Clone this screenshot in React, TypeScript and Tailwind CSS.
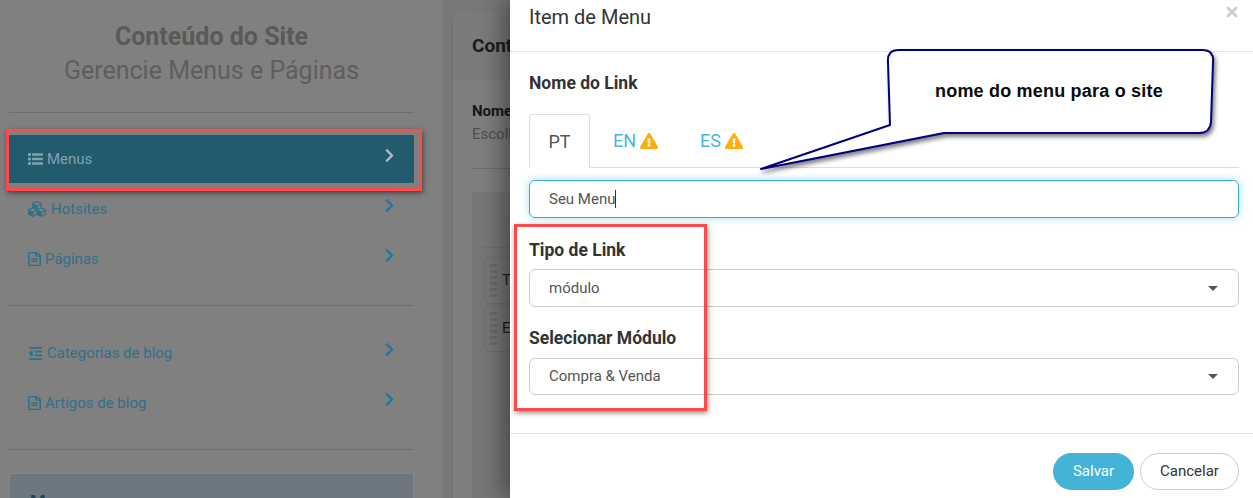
import React from 'react';
import { FaCubes, FaRegFileAlt, FaOutdent, FaChevronRight, FaExclamationTriangle, FaTimes } from 'react-icons/fa';

const roboto = "font-['Roboto',sans-serif]";

type NavItem = { label: string; icon: React.ReactNode; active?: boolean };

const ListIcon = () => (
  <svg width="15" height="12" viewBox="0 0 15 12" fill="currentColor">
    <rect x="0" y="0" width="3" height="3" rx="0.8" />
    <rect x="4" y="0.3" width="11" height="2.4" rx="0.4" />
    <rect x="0" y="4.5" width="3" height="3" rx="0.8" />
    <rect x="4" y="4.8" width="11" height="2.4" rx="0.4" />
    <rect x="0" y="9" width="3" height="3" rx="0.8" />
    <rect x="4" y="9.3" width="11" height="2.4" rx="0.4" />
  </svg>
);

const NavRow: React.FC<NavItem> = ({ label, icon, active }) => (
  <div
    className={`flex h-[48px] items-center justify-between pl-[19px] pr-[17px] text-[15px] ${
      active ? 'bg-[#225a6e] text-[#7fa3af]' : 'text-[#2f7089]'
    }`}
  >
    <span className="flex items-center gap-[4px]">
      {icon}
      {label}
    </span>
    <FaChevronRight className={`-mt-[8px] h-[15px] w-[15px] ${active ? 'text-[#a9bcc3]' : 'text-[#22789a]'}`} />
  </div>
);

const DragRow: React.FC<{ letter: string }> = ({ letter }) => (
  <div className="flex h-[47px] items-center gap-[5px] rounded-[8px] border border-[#6e6e6e] pl-[6px]">
    <div className="grid grid-cols-2 gap-x-[1px] gap-y-[3px]">
      {Array.from({ length: 12 }).map((_, i) => (
        <span key={i} className="h-[3px] w-[3px] bg-[#696969]" />
      ))}
    </div>
    <span className="text-[15px] text-[#1c1c1c]">{letter}</span>
  </div>
);

const SelectBox: React.FC<{ value: string; height: string }> = ({ value, height }) => (
  <div className={`flex ${height} items-center justify-between rounded-[6px] border border-[#cccccc] bg-white pl-[19px] pr-[20px] text-[15px] text-[#555555]`}>
    {value}
    <span className="h-0 w-0 border-x-[5px] border-t-[5px] border-x-transparent border-t-[#555555]" />
  </div>
);

const App: React.FC = () => {
  return (
    <div className={`relative flex h-[498px] w-[1253px] overflow-hidden bg-[#808080] ${roboto}`}>
      {/* sidebar */}
      <aside className="w-[443px] shrink-0 pl-[9px] pr-[29px] pt-[19px]">
        <h1 className="text-center text-[25px] font-bold leading-[35px] text-[#5b5958]">Conteúdo do Site</h1>
        <h2 className="mb-[24px] text-center text-[25px] leading-[34px] text-[#5f5e5d]">Gerencie Menus e Páginas</h2>
        <div className="border-t border-[#6e6e6e]" />
        <nav className="mt-[22px] flex flex-col gap-[2px]">
          <NavRow active label="Menus" icon={<ListIcon />} />
          <NavRow label="Hotsites" icon={<FaCubes className="mr-[1px] h-[18px] w-[18px]" />} />
          <NavRow label="Páginas" icon={<FaRegFileAlt preserveAspectRatio="none" className="h-[14px] w-[13px]" />} />
        </nav>
        <div className="mt-[22px] border-t border-[#6e6e6e]" />
        <nav className="mt-[23px] flex flex-col gap-[2px]">
          <NavRow label="Categorias de blog" icon={<FaOutdent className="h-[15px] w-[15px]" />} />
          <NavRow label="Artigos de blog" icon={<FaRegFileAlt preserveAspectRatio="none" className="h-[14px] w-[13px]" />} />
        </nav>
        <div className="mt-[22px] border-t border-[#6e6e6e]" />
        <div className="mt-[23px] h-[60px] border border-[#6f8f9a] bg-[#6d7780] px-[20px] pt-[14px] text-[18px] font-bold text-[#1f4557]">
          Menus
        </div>
      </aside>

      {/* page content behind the modal */}
      <main className="flex-1 bg-[#787878] pl-[9px] pt-[12px]">
        <div className="h-full rounded-tl-[8px] border-l border-[#6f6f6f] bg-[#7f7f7f]">
          <div className="flex h-[68px] items-center rounded-tl-[8px] bg-[#7b7b7b] pl-[19px] text-[19px] font-bold text-[#1c1c1c]">
            Cont
          </div>
          <div className="pl-[19px] pt-[21px]">
            <p className="text-[15px] font-bold leading-[20px] text-[#161616]">Nome</p>
            <p className="mt-[2px] text-[15px] leading-[22px] text-[#505050]">Escoll</p>
            <div className="mt-[23px] border-t border-[#6e6e6e]" />
            <div className="mt-[23px] h-[400px] bg-[#777777] px-[11px] pt-[55px]">
              <div className="border-t border-[#6e6e6e] pt-[9px]">
                <div className="flex flex-col gap-[1px]">
                  <DragRow letter="T" />
                  <DragRow letter="E" />
                </div>
              </div>
            </div>
          </div>
        </div>
      </main>

      {/* modal */}
      <section className="absolute bottom-0 left-[510px] right-0 top-0 flex flex-col bg-white shadow-[-6px_0_24px_rgba(0,0,0,0.45)]">
        <header className="flex h-[52px] shrink-0 justify-between border-b border-[#e5e5e5] pl-[19px] pr-[13px] pt-[4px]">
          <h3 className="text-[20px] leading-[26px] text-[#333333]">Item de Menu</h3>
          <FaTimes className="h-[16px] w-[16px] text-[#cfcfcf]" />
        </header>
        <div className="flex-1 px-[14px] pl-[19px]">
          <label className="mt-[19px] block text-[17.5px] font-bold leading-[24px] text-[#333333]">Nome do Link</label>
          <div className="mt-[19px] flex h-[54px] border-b border-[#dddddd] text-[18px]">
            <span className="-mb-px flex w-[61px] items-center justify-center rounded-t-[3px] border border-b-white border-[#dddddd] bg-white text-[#555555]">PT</span>
            <span className="flex items-center gap-[4px] pl-[23px] text-[#46b8da]">
              EN <FaExclamationTriangle className="h-[18px] w-[18px] text-[#ffad0a]" />
            </span>
            <span className="flex items-center gap-[4px] pl-[42px] text-[#46b8da]">
              ES <FaExclamationTriangle className="h-[18px] w-[18px] text-[#ffad0a]" />
            </span>
          </div>
          <div className="mt-[12px] flex h-[38px] items-center rounded-[6px] border border-[#3aa9d2] pl-[19px] text-[15px] text-[#555555] shadow-[0_0_8px_rgba(102,200,233,0.6)]">
            Seu Menu
            <span className="h-[18px] w-px bg-[#333333]" />
          </div>
          <label className="mt-[20px] block text-[17.5px] font-bold leading-[24px] text-[#333333]">Tipo de Link</label>
          <div className="mt-[7px]">
            <SelectBox value="módulo" height="h-[38px]" />
          </div>
          <label className="mt-[19px] block text-[17.5px] font-bold leading-[24px] text-[#333333]">Selecionar Módulo</label>
          <div className="mt-[8px]">
            <SelectBox value="Compra & Venda" height="h-[37px]" />
          </div>
        </div>
        <footer className="flex h-[65px] shrink-0 items-start justify-end gap-[6px] border-t border-[#e5e5e5] pr-[14px] pt-[19px] text-[15px]">
          <button className="h-[37px] w-[81px] rounded-full bg-[#43b3d6] text-white">Salvar</button>
          <button className="h-[37px] w-[99px] rounded-full border border-[#cccccc] bg-white text-[#333333]">Cancelar</button>
        </footer>
      </section>

      {/* annotations drawn on top of the screenshot */}
      <div className="absolute left-[6px] top-[129px] h-[62px] w-[416px] border-[3px] border-[#ff4a4a] shadow-[1px_2px_5px_rgba(0,0,0,0.5)]" />
      <div className="absolute left-[514px] top-[224px] h-[187px] w-[193px] border-[3px] border-[#ff4a4a] shadow-[1px_2px_5px_rgba(0,0,0,0.45)]" />
      <svg className="absolute left-[750px] top-[40px] drop-shadow-[2px_3px_2px_rgba(0,0,0,0.5)]" width="480" height="140" viewBox="750 40 480 140">
        <path
          d="M761 169 L890 125 L888 62 Q887 50 899 50 L1202 50 Q1214 50 1213 62 L1211 122 Q1210 133 1199 133 L944 133 Z"
          fill="#ffffff"
          stroke="#000080"
          strokeWidth="2"
          strokeLinejoin="round"
        />
      </svg>
      <div className="absolute left-[935px] top-[80px] font-['Liberation_Sans',sans-serif] text-[18px] font-bold leading-[22px] tracking-[0.2px] text-[#0a0a0a]">
        nome do menu para o site
      </div>
    </div>
  );
};

export default App;
